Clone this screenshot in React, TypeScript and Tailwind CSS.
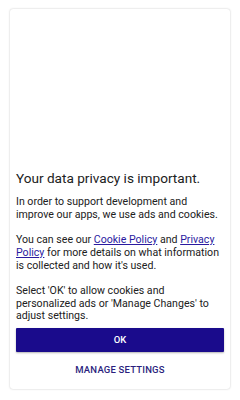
export default function App() {
  return (
    <div className="w-[240px] h-[400px] bg-white pt-[9px] px-[10px]" style={{ fontFamily: "Roboto, 'Noto Sans', sans-serif" }}>
      <div className="h-[380px] rounded-[3px] bg-white shadow-[0_0_2px_rgba(0,0,0,0.25)] flex flex-col justify-end px-[6px]">
        <h1 className="text-[13.6px] leading-[17px] text-[#212121] mb-[9px]">Your data privacy is important.</h1>
        <p className="text-[10.6px] leading-[12.7px] text-[#212121] mb-[12.7px]">
          In order to support development and improve our apps, we use ads and cookies.
        </p>
        <p className="text-[10.6px] leading-[12.7px] text-[#212121] mb-[12.7px]">
          You can see our{" "}
          <a href="#" className="text-[#2a1aa0] underline">Cookie Policy</a> and{" "}
          <a href="#" className="text-[#2a1aa0] underline">Privacy Policy</a> for more details on what information is collected and how it's used.
        </p>
        <p className="text-[10.6px] leading-[12.7px] text-[#212121] mb-[5px]">
          Select 'OK' to allow cookies and personalized ads or 'Manage Changes' to adjust settings.
        </p>
        <button className="h-[24px] w-full bg-[#1a0b8c] text-white text-[9.5px] font-medium rounded-[1px] shadow-[0_1px_2px_rgba(0,0,0,0.3)]">
          OK
        </button>
        <button className="h-[37px] w-full text-[#2b1f7e] text-[9.5px] font-medium tracking-[0.2px]">
          MANAGE SETTINGS
        </button>
      </div>
    </div>
  );
}
